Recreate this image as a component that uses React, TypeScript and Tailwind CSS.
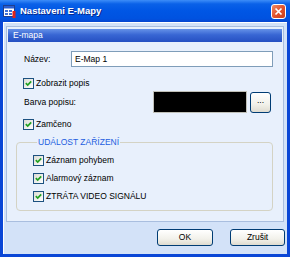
import React from "react";

const font = { fontFamily: '"Liberation Sans", Arial, sans-serif' };

function Check() {
  return (
    <span className="flex h-[11px] w-[11px] shrink-0 items-center justify-center border border-[#1c5180] bg-[linear-gradient(135deg,#dcdcd4,#ffffff)]">
      <svg width="7" height="7" viewBox="0 0 7 7">
        <path d="M0.8 3.2 L2.7 5.1 L6.2 1.4" stroke="#21a121" strokeWidth="1.7" fill="none" />
      </svg>
    </span>
  );
}

function CheckRow({ label }: { label: string }) {
  return (
    <div className="flex items-center gap-[2px]">
      <Check />
      <span className="text-[8.5px] leading-none text-black">{label}</span>
    </div>
  );
}

function XpButton({ label, className }: { label: string; className?: string }) {
  return (
    <button
      className={
        "flex items-center justify-center rounded-[3px] border border-[#003c74] bg-[linear-gradient(to_bottom,#ffffff,#f2f1ea_60%,#dedbd0)] text-[8.5px] leading-none text-black " +
        (className ?? "")
      }
    >
      {label}
    </button>
  );
}

function AppIcon() {
  return (
    <svg width="13" height="13" viewBox="0 0 13 13">
      <rect x="0.5" y="0.5" width="11" height="11" fill="#ffffff" stroke="#1f3f8f" />
      <rect x="1" y="1" width="10" height="2.5" fill="#2d5fd0" />
      <rect x="2" y="5" width="3" height="2" fill="#3b6fd8" />
      <rect x="6" y="5" width="3" height="2" fill="#3b6fd8" />
      <rect x="2" y="8" width="3" height="2" fill="#3b6fd8" />
      <rect x="6" y="8" width="3" height="2" fill="#3b6fd8" />
      <rect x="9.5" y="6" width="3" height="7" fill="#e0231b" />
    </svg>
  );
}

export default function App() {
  return (
    <div style={font} className="flex h-[257px] w-[290px] flex-col bg-[#0a46d6]">
      {/* title bar */}
      <div className="flex h-[22px] shrink-0 items-center bg-[linear-gradient(to_bottom,#3d8df8_0%,#0a61e8_18%,#0056e4_50%,#0052e0_85%,#0746d0_100%)] pl-[3px] pr-[4px]">
        <AppIcon />
        <span className="ml-[4px] text-[9.5px] font-bold leading-none text-white [text-shadow:1px_1px_0_#0a2a8a]">
          Nastaveni E-Mapy
        </span>
        <div className="ml-auto flex h-[15px] w-[15px] items-center justify-center rounded-[3px] border border-white bg-[linear-gradient(135deg,#f08a64,#e0502a_55%,#c8401c)]">
          <svg width="9" height="9" viewBox="0 0 9 9">
            <path d="M1.5 1.5 L7.5 7.5 M7.5 1.5 L1.5 7.5" stroke="#ffffff" strokeWidth="1.7" />
          </svg>
        </div>
      </div>

      {/* body */}
      <div className="mx-[3px] mb-[3px] flex flex-1 flex-col border-l border-t border-white bg-[#d3e2f8]">
        {/* panel */}
        <div className="ml-[2px] mr-[3px] mt-[3px] flex h-[196px] flex-col border border-[#a9bedf] bg-[#e8f0fc] px-[1px] pt-[2px]">
          <div className="flex h-[13px] items-center bg-[linear-gradient(to_bottom,#6592e8,#3866d3_45%,#2650c2)] pl-[5px] text-[8.5px] leading-none text-white">
            E-mapa
          </div>

          <div className="flex flex-col pl-[8px] pr-[9px]">
            {/* Název */}
            <div className="mt-[9px] flex h-[16px] items-center pl-[8px]">
              <span className="w-[47px] text-[8.5px] leading-none text-black">Název:</span>
              <div className="flex h-[16px] flex-1 items-center border border-[#7f9db9] bg-white pl-[3px] text-[8.5px] leading-none text-black">
                E-Map 1
              </div>
            </div>

            <div className="mt-[11px] pl-[7px]">
              <CheckRow label="Zobrazit popis" />
            </div>

            {/* Barva */}
            <div className="mt-[2px] flex h-[22px] items-center pl-[8px] pr-[2px]">
              <span className="text-[8.5px] leading-none text-black">Barva popisu:</span>
              <div className="ml-auto h-[22px] w-[94px] border border-[#c0c0b8] bg-black" />
              <XpButton label="..." className="ml-[3px] h-[21px] w-[21px] border-[#2c5a9c] pb-[4px]" />
            </div>

            <div className="mt-[6px] pl-[7px]">
              <CheckRow label="Zamčeno" />
            </div>

            {/* group */}
            <fieldset className="mt-[8px] h-[73px] rounded-[4px] border border-[#d4d3c4] px-[16px] pt-[8px]">
              <legend className="ml-[4px] px-[1px] text-[8.5px] leading-none text-[#1d5ee0]">UDÁLOST ZAŘÍZENÍ</legend>
              <div className="flex flex-col gap-[7px]">
                <CheckRow label="Záznam pohybem" />
                <CheckRow label="Alarmový záznam" />
                <CheckRow label="ZTRÁTA VIDEO SIGNÁLU" />
              </div>
            </fieldset>
          </div>
        </div>

        {/* buttons */}
        <div className="mt-[7px] flex justify-end gap-[17px] pr-[2px]">
          <XpButton label="OK" className="h-[17px] w-[56px]" />
          <XpButton label="Zrušit" className="h-[17px] w-[55px]" />
        </div>
      </div>
    </div>
  );
}
